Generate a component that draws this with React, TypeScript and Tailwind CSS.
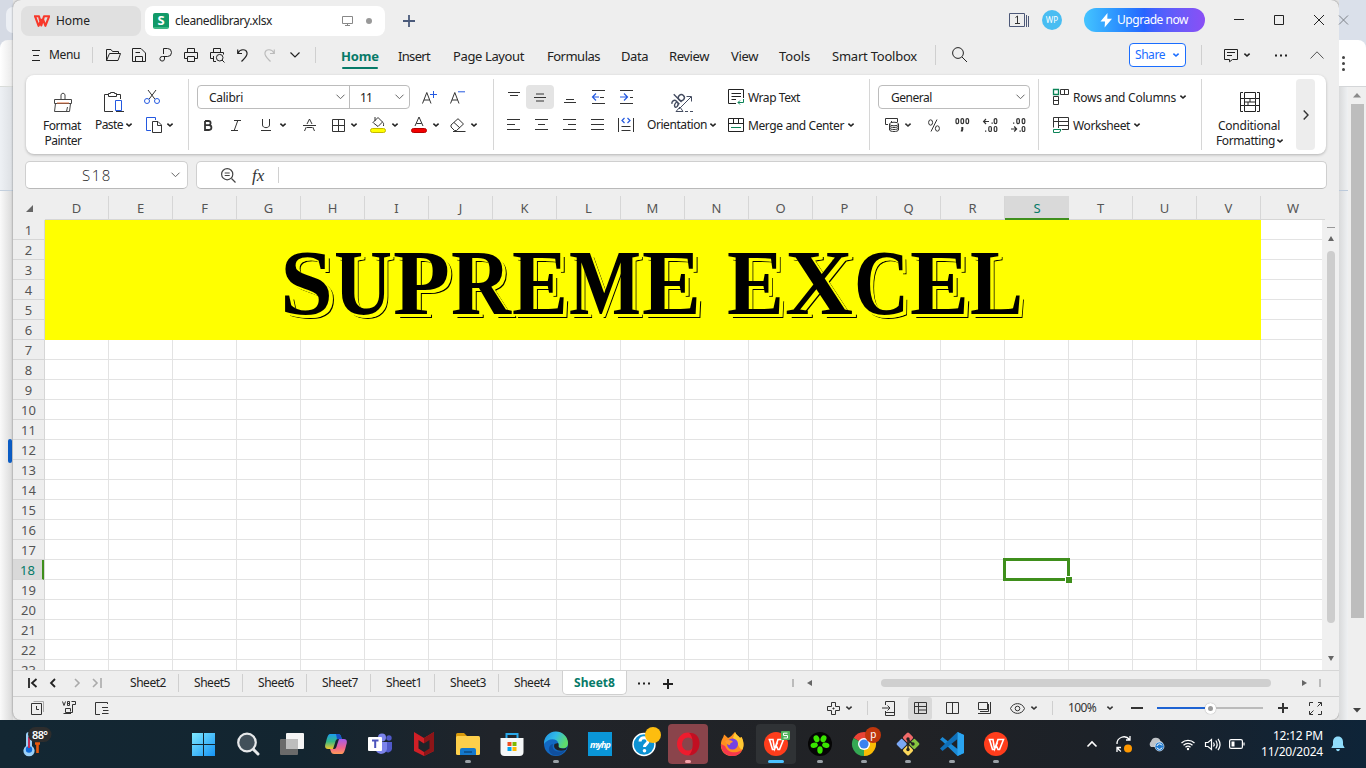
import { useLayoutEffect, useRef } from "react";
import type { ReactNode } from "react";

type IcProps = { w: number; h: number; c?: string; sw?: number; children: ReactNode };

function Ic({ w, h, c = "", sw = 1, children }: IcProps) {
  return (
    <svg
      width={w}
      height={h}
      viewBox={`0 0 ${w} ${h}`}
      fill="none"
      stroke="currentColor"
      strokeWidth={sw}
      className={`shrink-0 overflow-visible ${c}`}
    >
      {children}
    </svg>
  );
}

/* Label whose letter spacing adapts so the text fills the width of its box. */
function Fit({ c = "", children }: { c?: string; children: string }) {
  const ref = useRef<HTMLSpanElement>(null);
  useLayoutEffect(() => {
    const inner = ref.current;
    if (!inner || !inner.parentElement) return;
    inner.style.letterSpacing = "0px";
    const space = inner.parentElement.clientWidth - inner.getBoundingClientRect().width;
    inner.style.letterSpacing = `${space / Math.max(1, children.length)}px`;
  }, [children]);
  return (
    <span className={`block shrink-0 whitespace-nowrap ${c}`}>
      <span ref={ref} className="inline-block">
        {children}
      </span>
    </span>
  );
}

function Chev({ c = "" }: { c?: string }) {
  return (
    <span className={`flex w-3 shrink-0 justify-center ${c}`}>
      <Ic w={6} h={4} sw={1.6}>
        <path d="M.4 .6 3 3 5.6 .6" />
      </Ic>
    </span>
  );
}

function BigChev() {
  return (
    <Ic w={9} h={6} c="text-[#666]">
      <path d="M.5 .7 4.5 4.7 8.5 .7" />
    </Ic>
  );
}

function Cell({ c = "w-7", children }: { c?: string; children: ReactNode }) {
  return <span className={`flex shrink-0 items-center justify-center ${c}`}>{children}</span>;
}

function BehindLeft() {
  return (
    <div className="flex w-[13px] shrink-0 flex-col bg-[#d5dae4]">
      <div className="h-[40px] pt-[7px] pl-[6px]">
        <div className="h-[26px] rounded-l-xl bg-[#eceff4]" />
      </div>
      <div className="h-[47px] rounded-tl-lg border-b border-[#d9dcd9] bg-gradient-to-r from-white to-[#e8e8e8]" />
      <div className="h-[104px] border-b border-[#c3cfdd] bg-gradient-to-r from-[#eef1f5] to-[#dcdfe3]" />
      <div className="flex-1 bg-gradient-to-r from-[#fafafa] to-[#d8d8d8] pt-[248px] pl-2">
        <div className="h-6 w-1 rounded-[2px] bg-[#0b5cc4]" />
      </div>
    </div>
  );
}

function BehindRight() {
  return (
    <div className="flex w-[27px] shrink-0 flex-col bg-[#dae0ea]">
      <div className="h-[40px] pt-[15px]">
        <Ic w={10} h={10} c="text-[#7d8187]">
          <path d="M0 .5 9 9.5M9 .5 0 9.5" />
        </Ic>
      </div>
      <div className="flex h-[47px] flex-col gap-[3px] rounded-tr-lg border-b border-[#d4d6d8] bg-white pt-[16px] pl-[3px]">
        <i className="size-[3px] rounded-full bg-[#444]" />
        <i className="size-[3px] rounded-full bg-[#444]" />
        <i className="size-[3px] rounded-full bg-[#444]" />
      </div>
      <div className="flex flex-1">
        <div className="w-[9px] bg-gradient-to-r from-[#d9dadb] to-[#eff1f3]">
          <div className="h-[104px] border-b border-[#bccadb]" />
        </div>
        <div className="flex flex-1 flex-col items-center bg-[#efefef]">
          <div className="flex h-[17px] items-center">
            <Ic w={8} h={5}>
              <path d="M0 4.5 4 0 8 4.5z" fill="#8a8a8a" stroke="none" />
            </Ic>
          </div>
          <div className="h-[514px] w-[13px] bg-[#bdbdbd]" />
          <div className="flex flex-1 items-end pb-[7px]">
            <Ic w={8} h={5}>
              <path d="M0 0 4 4.5 8 0z" fill="#444" stroke="none" />
            </Ic>
          </div>
        </div>
      </div>
    </div>
  );
}

function WpsMark({ s = 16, color = "#f8382a" }: { s?: number; color?: string }) {
  return (
    <svg width={s} height={s * 0.75} viewBox="0 0 16 12" fill="none" stroke={color} strokeWidth="2.1" strokeLinejoin="round" className="shrink-0">
      <path d="M0 1.2H5L7.3 10.4 10 1.2H15.2L11.4 10.8 8.6 3.2M1 1.2 4.6 10.8 7.6 4" />
    </svg>
  );
}

function TitleBar() {
  return (
    <div className="flex h-[40px] items-center pl-2">
      <div className="mt-[2px] flex h-[30px] w-[120px] items-center rounded-lg bg-[#e0e0e0] pl-[13px] text-[#222]">
        <WpsMark />
        <Fit c="ml-[6px] w-[34px] text-[12px]">Home</Fit>
      </div>
      <div className="mt-[2px] ml-1 flex h-[30px] w-[240px] items-center rounded-lg bg-white pl-2 text-[#222]">
        <div className="flex h-4 w-4 flex-col items-center justify-center rounded-[2px] border-b-2 border-[#3db784] bg-[#119a68] text-[13px] leading-none font-bold text-white">
          S
        </div>
        <Fit c="ml-[6px] w-[97px] text-[12px]">cleanedlibrary.xlsx</Fit>
        <Ic w={11} h={10} c="ml-[70px] text-[#888]">
          <path d="M.5 .5H10.5V7.5H.5zM5.5 7.5V9.5M3 9.5H8" />
        </Ic>
        <i className="ml-[13px] size-[6px] rounded-full bg-[#999]" />
      </div>
      <Ic w={12} h={12} sw={1.8} c="mt-[2px] ml-[18px] text-[#4a5a7a]">
        <path d="M6 0V12M0 6H12" />
      </Ic>
      <Ic w={20} h={14} c="ml-[594px] text-[#4d5878]">
        <path d="M.5 .5H15.5V13.5H.5zM17.5 2V14M19.5 3V14" />
        <path d="M6.5 4.5 8.5 3V10.5M6 10.5H11" stroke="#333" />
      </Ic>
      <div className="ml-[13px] flex size-5 items-center justify-center rounded-full bg-[#49bdf2] text-[8px] text-white">WP</div>
      <div className="ml-[22px] flex h-6 w-[121px] items-center rounded-full bg-gradient-to-r from-[#45c4ff] via-[#2864ff] to-[#8a4ff5] pl-4 text-white">
        <Ic w={13} h={15}>
          <path d="M7.5 0 .5 8.6H5L4.6 14.5 12 5.8H7.3z" fill="#fff" stroke="none" />
        </Ic>
        <Fit c="ml-1 w-[71px] text-[12px]">Upgrade now</Fit>
      </div>
      <Ic w={10} h={10} c="ml-[29px] text-[#222]">
        <path d="M0 4.5H10" />
      </Ic>
      <Ic w={10} h={10} c="ml-[30px] text-[#222]">
        <path d="M.5 .5H9.5V9.5H.5z" />
      </Ic>
      <Ic w={10} h={10} c="ml-[30px] text-[#222]">
        <path d="M0 0 10 10M10 0 0 10" />
      </Ic>
    </div>
  );
}

function MenuRow() {
  return (
    <div className="flex h-[34px] items-center pb-[4px] pl-[19px] text-[#222]">
      <Ic w={8} h={12}>
        <path d="M0 1.5H8M1 6.5H7M0 11.5H8" />
      </Ic>
      <Fit c="ml-[9px] w-[31px] text-[12px]">Menu</Fit>
      <i className="ml-[12px] h-4 w-px bg-[#cfcfcf]" />
      <Ic w={15} h={12} c="ml-[13px]">
        <path d="M.5 11.5V.5H5L6.5 2.5H12.5V4.5M.5 11.5 3.5 4.5H14.5L12 11.5z" />
      </Ic>
      <Ic w={14} h={14} c="ml-[11px]">
        <path d="M.5 .5H9L13.5 5V13.5H.5zM3.5 13.5V8.5H10.5V13.5M3.5 4.5H8" />
      </Ic>
      <Ic w={12} h={14} c="ml-[13px]">
        <path d="M4.5 6V.5H8.5A3.500 3.500 0 0 1 8.5 8.5H3.5A2.3 2.3 0 1 0 5.500 11V8.5" />
      </Ic>
      <Ic w={14} h={14} c="ml-[13px]">
        <path d="M3.5 4.5V.5H10.5V4.5M3.5 10.5H.5V4.5H13.5V10.5H10.5M3.5 8.5H10.5V13.5H3.5z" />
      </Ic>
      <Ic w={15} h={15} c="ml-[12px]">
        <path d="M3.5 4.5V.5H10.5V4.5M3.5 10.5H.5V4.5H13.5V6.5M3.5 8V13.5H6M12 12 14.5 14.5" />
        <circle cx="9.7" cy="9.7" r="3.3" />
      </Ic>
      <Ic w={11} h={13} sw={1.2} c="ml-[12px]">
        <path d="M.7 .5V4.5H5M.9 4.3C3-.3 9-.3 10 3.6 10.8 6.8 7.5 9.5 4.5 12.5" />
      </Ic>
      <Ic w={11} h={13} sw={1.2} c="ml-[16px] text-[#bbb]">
        <path d="M10.3 .5V4.5H6M10.1 4.3C8-.3 2-.3 1 3.6 .2 6.8 3.5 9.5 6.5 12.5" />
      </Ic>
      <Ic w={10} h={6} sw={1.2} c="ml-[15px]">
        <path d="M.5 .5 5 5 9.5 .5" />
      </Ic>
      <i className="ml-[15px] h-4 w-px bg-[#cfcfcf]" />
      <div className="flex h-[30px] items-start pt-[6px] text-[13px] leading-[20px]">
        <div className="ml-[25px] flex flex-col text-[#067a68]">
          <Fit c="w-[38px] font-bold">Home</Fit>
          <i className="mt-px ml-px h-[2px] w-[36px] shrink-0 rounded-full bg-[#067a68]" />
        </div>
        <Fit c="ml-[19px] w-[32px]">Insert</Fit>
        <Fit c="ml-[23px] w-[71px]">Page Layout</Fit>
        <Fit c="ml-[23px] w-[53px]">Formulas</Fit>
        <Fit c="ml-[21px] w-[27px]">Data</Fit>
        <Fit c="ml-[21px] w-[40px]">Review</Fit>
        <Fit c="ml-[22px] w-[27px]">View</Fit>
        <Fit c="ml-[21px] w-[31px]">Tools</Fit>
        <Fit c="ml-[22px] w-[85px]">Smart Toolbox</Fit>
      </div>
      <i className="ml-[18px] h-5 w-px bg-[#cfcfcf]" />
      <Ic w={16} h={16} c="ml-[16px]">
        <circle cx="6" cy="6" r="5.4" />
        <path d="M10 10 15 15" />
      </Ic>
      <div className="ml-[161px] flex h-6 w-[57px] items-center rounded-[4px] border border-[#1a6dff] bg-white pl-[5px] text-[#1a6dff]">
        <Fit c="w-[30px] text-[12px]">Share</Fit>
        <Chev c="ml-[5px]" />
      </div>
      <i className="ml-[15px] h-5 w-px bg-[#cfcfcf]" />
      <Ic w={14} h={13} c="ml-[22px]">
        <path d="M.5 .5H13.5V10.5H8.5L5.5 12.8V10.5H.5zM3 3.5H11M3 6.5H8" />
      </Ic>
      <Chev c="ml-[3px]" />
      <Ic w={14} h={3} c="ml-[21px]">
        <path d="M1 1.5H3M6 1.5H8M11 1.5H13" strokeWidth="2" />
      </Ic>
      <Ic w={14} h={8} c="ml-[22px] text-[#555]">
        <path d="M.5 7.5 7 .8 13.5 7.5" />
      </Ic>
    </div>
  );
}

function Lines({ d, blue, c = "" }: { d: string; blue?: string; c?: string }) {
  return (
    <Cell c={`h-6 w-7 ${c}`}>
      <Ic w={14} h={14} c="text-[#333]">
        <path d={d} />
        {blue && <path d={blue} stroke="#2459e0" strokeWidth="1.2" />}
      </Ic>
    </Cell>
  );
}

function Ribbon() {
  return (
    <div className="mx-[13px] mt-px flex h-[79px] shrink-0 rounded-[8px] bg-white py-1 text-[12px] leading-[15px] text-[#222] shadow-[0_1px_3px_rgba(0,0,0,0.25)]">
      <div className="flex w-[163px] shrink-0 border-r border-[#d6d6d6]">
        <div className="ml-[14px] flex w-[46px] flex-col items-center pt-[13px]">
          <Ic w={18} h={20} c="text-[#444]">
            <path d="M7 7.5V2.500Q9-.5 11 2.500V7.500M.5 7.5H17.5V11.5H.5zM1.5 11.5 .5 19.5H15.5L16.5 11.5M12.5 19.5 13.5 15" />
            <path d="M3 11H15" stroke="#e07040" />
          </Ic>
          <Fit c="mt-[6px] mr-[2px] w-[38px]">Format</Fit>
          <Fit c="w-[37px]">Painter</Fit>
        </div>
        <div className="ml-[9px] flex w-[40px] flex-col items-start pt-[13px]">
          <Ic w={21} h={20} c="ml-[9px] text-[#333]">
            <path d="M4 2.5H.5V19.5H9M13 2.5H16.5V7M4.5 4.5V1.5H6.5V.5H10.5V1.5H12.5V4.5z" />
            <path d="M11.5 8.5H17.5V18.5H11.5z" stroke="#2459e0" />
            <path d="M12 19.5H20" />
          </Ic>
          <div className="mt-[5px] flex items-center">
            <Fit c="w-[28px]">Paste</Fit>
            <Chev />
          </div>
        </div>
        <div className="ml-[9px] flex flex-col">
          <Ic w={16} h={14} c="mt-[11px] text-[#333]">
            <path d="M4 0 10.8 9M12 0 5.2 9" />
            <circle cx="3" cy="11" r="2.5" stroke="#2459e0" />
            <circle cx="13" cy="11" r="2.5" stroke="#2459e0" />
          </Ic>
          <div className="mt-[13px] flex items-center">
            <Ic w={16} h={16} c="ml-[2px] text-[#333]">
              <path d="M5 13.5H.5V.5H9.5V3" stroke="#2459e0" />
              <path d="M6.5 4.5H12L15.5 8V15.5H6.5zM11.5 4.5V8.5H15.5" />
            </Ic>
            <Chev c="ml-[2px]" />
          </div>
        </div>
      </div>

      <div className="flex w-[305px] shrink-0 flex-col border-r border-[#d6d6d6] pt-[6px]">
        <div className="ml-[8px] flex items-center">
          <div className="flex h-6 w-[213px] rounded-[4px] border border-[#bcbcbc]">
            <div className="flex w-[152px] items-center border-r border-[#bcbcbc] pl-[11px]">
              <Fit c="w-[34px] pt-px">Calibri</Fit>
              <span className="ml-[93px]">
                <BigChev />
              </span>
            </div>
            <div className="flex items-center pl-[10px]">
              <Fit c="w-[12px] pt-px">11</Fit>
              <span className="ml-[23px]">
                <BigChev />
              </span>
            </div>
          </div>
          <Ic w={15} h={13} c="ml-[12px] text-[#333]">
            <path d="M.5 12.5 4.8 1.5 9 12.5M2 9H7.6" />
            <path d="M11.5 0V7M8 3.5H15" stroke="#2459e0" />
          </Ic>
          <Ic w={15} h={13} c="ml-[13px] text-[#333]">
            <path d="M.5 12.5 4.8 1.5 9 12.5M2 9H7.6" />
            <path d="M8 .8H15" stroke="#2459e0" />
          </Ic>
        </div>
        <div className="mt-[4px] ml-[5px] flex h-6 items-center">
          <Cell>
            <Ic w={8} h={11} sw={1.8} c="text-[#333]">
              <path d="M1 1H4.5A2 2 0 0 1 4.5 5.2H1V1M1 5.2H5A2.3 2.3 0 0 1 5 10H1V5" />
            </Ic>
          </Cell>
          <Cell>
            <Ic w={10} h={11} c="text-[#333]">
              <path d="M3 .5H10M0 10.5H7M6.8 .5 3.2 10.5" />
            </Ic>
          </Cell>
          <Cell c="ml-[5px] w-[22px]">
            <Ic w={10} h={12} c="text-[#333]">
              <path d="M1.5 0V6C1.5 9.5 8.5 9.5 8.5 6V0M0 11.5H10" />
            </Ic>
          </Cell>
          <Chev />
          <Cell c="ml-[6px] w-7">
            <Ic w={13} h={12} c="text-[#333]">
              <path d="M4 5 6.5 0 9 5M0 6.5H13M3.3 8 1.5 12M9.7 8 11.5 12M4 8.5H9" />
            </Ic>
          </Cell>
          <Cell c="ml-[5px] w-5">
            <Ic w={13} h={13} c="text-[#333]">
              <path d="M.5 .5H12.5V12.5H.5zM6.5 .5V12.5M.5 6.5H12.5" />
            </Ic>
          </Cell>
          <Chev />
          <Cell c="ml-[7px] w-[22px]">
            <Ic w={16} h={16} c="text-[#333]">
              <path d="M3 5.500 8 .5 12.5 5 8 9.5 3.5 6zM5 0V4M12.5 5C14 6 13.5 7 13.5 9" />
              <rect x=".5" y="11.5" width="15" height="4" rx="2" fill="#ffff00" stroke="#c4b800" />
            </Ic>
          </Cell>
          <Chev />
          <Cell c="ml-[7px] w-[22px]">
            <Ic w={16} h={16} c="text-[#333]">
              <path d="M4 9 8 0 12 9M5.3 6.5H10.7" />
              <rect x=".5" y="11.5" width="15" height="4" rx="2" fill="#f20000" stroke="#b80000" />
            </Ic>
          </Cell>
          <Chev />
          <Cell c="ml-[5px] w-[21px]">
            <Ic w={16} h={14} c="text-[#333]">
              <path d="M1 7 8 .7 13.5 6 6.5 12.5H4.5L1 9zM4 4.5 10 10M3 13.5H15.5" />
            </Ic>
          </Cell>
          <Chev />
        </div>
      </div>

      <div className="flex w-[376px] shrink-0 border-r border-[#d6d6d6]">
        <div className="ml-[6px] grid w-[140px] grid-cols-5 content-start gap-y-[4px] pt-[6px]">
          <Lines d="M1 2.5H13M3 5.5H11" />
          <span className="pr-1">
            <Lines d="M3 4H11M1 7.5H13M3 11H11" c="-ml-[2px] rounded-[4px] bg-[#e4e4e4] w-6" />
          </span>
          <Lines d="M3 9.5H11M1 12.5H13" />
          <Lines d="M1 .5H14M9 7.5H13M1 13.5H14" blue="M8 7H2M5 3.5 1.5 7 5 10.5" />
          <Lines d="M1 .5H14M11 7.5H14M1 13.5H14" blue="M1 7H8M5 3.5 8.5 7 5 10.5" />
          <Lines d="M0 1.5H13M0 6.5H8M0 11.5H13" />
          <Lines d="M0 1.5H13M3 6.5H10M0 11.5H13" />
          <Lines d="M0 1.5H13M5 6.5H13M0 11.5H13" />
          <Lines d="M0 1.5H13M0 6.5H13M0 11.5H13" />
          <Lines d="M-.5 0V14M14.5 0V14M2.5 8.5H11.5M2.5 12.5H11.5" blue="M5.5 0 3 2.5 5.5 5M8.5 0 11 2.5 8.5 5" />
        </div>
        <div className="ml-[7px] flex w-[74px] flex-col pt-[11px]">
          <Ic w={24} h={24} c="ml-[23px] text-[#444c60]">
            <g transform="rotate(-45 8 10)" strokeWidth="1.400">
              <path d="M1 8.500C2 6.500 6 6.500 6 9.500V14M6 10.500C0 10 0 14.500 3 14 5 13.700 6 12.500 6 11M9 3V14" />
              <circle cx="12" cy="10.700" r="3" />
            </g>
            <path d="M9 19 21 7M16.500 6.500H21.5V11.500M6 21.500H13L10 17z" />
            <path d="M15 21.5H24" strokeDasharray="3 2" />
          </Ic>
          <div className="mt-[3px] flex items-center">
            <Fit c="w-[60px]">Orientation</Fit>
            <Chev />
          </div>
        </div>
        <div className="ml-[7px] flex flex-col pt-[6px]">
          <div className="flex h-6 items-center">
            <Ic w={16} h={16} c="text-[#222]">
              <path d="M8 14.5H.5V.5H15.5V9M3.5 4.5H13M3.5 7.5H13M3.5 10.5H8" />
              <path d="M15.5 10V13.5H10M12 11.5 10 13.5 12 15.5" stroke="#0b8457" />
            </Ic>
            <Fit c="ml-[4px] w-[52px]">Wrap Text</Fit>
          </div>
          <div className="mt-[4px] flex h-6 items-center">
            <Ic w={16} h={14} c="text-[#222]">
              <path d="M.5 .5H15.5V13.5H.5zM.5 5.5H15.5M5.5 .5V5.5M10.5 .5V5.5" />
              <path d="M3 9.5H13" stroke="#0b8457" />
            </Ic>
            <Fit c="ml-[4px] w-[96px]">Merge and Center</Fit>
            <Chev c="ml-[1px]" />
          </div>
        </div>
      </div>

      <div className="flex w-[169px] shrink-0 flex-col border-r border-[#d6d6d6] pt-[6px] pl-[8px]">
        <div className="flex h-6 w-[152px] items-center rounded-[4px] border border-[#bcbcbc] pl-[12px]">
          <Fit c="w-[41px] pt-px">General</Fit>
          <span className="ml-[84px]">
            <BigChev />
          </span>
        </div>
        <div className="mt-[4px] flex h-6 items-center text-[#333]">
          <Cell c="ml-[3px] w-[21px]">
            <Ic w={14} h={14}>
              <path d="M3 6.5H.5V.5H12.5V4M6 3.5H7" />
              <ellipse cx="9" cy="6" rx="4.5" ry="1.8" />
              <path d="M4.5 6V12C5 14 13 14 13.5 12V6M4.5 8C5 10 13 10 13.5 8M4.5 10C5 12 13 12 13.5 10" />
            </Ic>
          </Cell>
          <Chev />
          <Cell c="ml-[6px] w-7">
            <Ic w={12} h={13}>
              <ellipse cx="2.600" cy="3.500" rx="2" ry="2.700" />
              <ellipse cx="9.400" cy="9.500" rx="2" ry="2.700" />
              <path d="M9 .5 3 12.500" />
            </Ic>
          </Cell>
          <Cell>
            <Ic w={15} h={14} sw={1.200}>
              <rect x="1" y=".6" width="2.600" height="5" rx="1.300" />
              <rect x="6" y=".6" width="2.600" height="5" rx="1.300" />
              <rect x="11" y=".6" width="2.600" height="5" rx="1.300" />
              <path d="M7.300 9V11.500L6.500 13.500" strokeWidth="2" />
            </Ic>
          </Cell>
          <Cell>
            <Ic w={15} h={14} sw={1.200}>
              <path d="M6 3.500H.8M3 1 .6 3.500 3 6M8.500 5.200H9.800M2 13.200H3.300" />
              <rect x="11.200" y=".6" width="2.600" height="5" rx="1.300" />
              <rect x="5.800" y="8.500" width="2.600" height="5" rx="1.300" />
              <rect x="11.200" y="8.500" width="2.600" height="5" rx="1.300" />
            </Ic>
          </Cell>
          <Cell>
            <Ic w={15} h={14} sw={1.200}>
              <path d="M0 11H5.400M3.200 8.500 5.600 11 3.200 13.500M2 5.200H3.300M8.500 13.200H9.800" />
              <rect x="11.200" y=".6" width="2.600" height="5" rx="1.300" />
              <rect x="5.800" y=".6" width="2.600" height="5" rx="1.300" />
              <rect x="11.200" y="8.500" width="2.600" height="5" rx="1.300" />
            </Ic>
          </Cell>
        </div>
      </div>

      <div className="flex w-[163px] shrink-0 flex-col border-r border-[#d6d6d6] pt-[6px] pl-[14px]">
        <div className="flex h-6 items-center">
          <Ic w={16} h={16} c="text-[#333]">
            <path d="M.5 .5H5.5V5.5H.5z" stroke="#0b8457" strokeWidth="1.3" />
            <path d="M7.5 .5H15.5V5.5H7.5zM11.5 .5V5.5M.5 7.5H5.5V15.5H.5zM.5 11.5H5.5" />
          </Ic>
          <Fit c="ml-[4px] w-[103px]">Rows and Columns</Fit>
          <Chev c="ml-[1px]" />
        </div>
        <div className="mt-[4px] flex h-6 items-center">
          <Ic w={16} h={16} c="text-[#333]">
            <path d="M.5 10.5V.5H15.5V12.5H9M.5 4.5H15.5M5.5 .5V11M5.5 8.5H15.5" />
            <path d="M.5 12.5H8L6.5 15.5H.5z" stroke="#0b8457" />
          </Ic>
          <Fit c="ml-[4px] w-[57px]">Worksheet</Fit>
          <Chev c="ml-[1px]" />
        </div>
      </div>

      <div className="flex flex-1">
        <div className="flex w-[94px] flex-col items-center pt-[13px]">
          <Ic w={20} h={20} c="ml-[2px] text-[#222]">
            <path d="M3 .5H.5V19.5H3M17 .5H19.5V19.5H17M.5 6.5H4M.5 13.5H4M19.5 6.5H16M19.5 13.5H16M4.5 .5H15.5V6.5H4.5zM4.5 13.5H15.5V19.5H4.5zM4.5 6.5V13.5M15.5 6.5V13.5M4.5 10H15.5M10 6.5V10M8 10V13.5" />
          </Ic>
          <Fit c="mt-[6px] w-[62px]">Conditional</Fit>
          <div className="ml-[2px] flex items-center">
            <Fit c="w-[59px]">Formatting</Fit>
            <Chev c="w-[9px]" />
          </div>
        </div>
        <div className="flex w-[19px] items-center justify-center rounded-[4px] bg-[#ededed]">
          <Ic w={6} h={10} sw={1.4} c="text-[#333]">
            <path d="M.7 .5 5 5 .7 9.5" />
          </Ic>
        </div>
      </div>
    </div>
  );
}

function FormulaBar() {
  return (
    <div className="mt-[7px] flex h-[28px] shrink-0 gap-2 px-[12px]">
      <div className="flex w-[163px] items-center rounded-[5px] border border-[#cfcfcf] border-b-[#b9b9b9] bg-white pl-[56px] text-[#222]">
        <Fit c="w-[30px] font-['Open_Sans','Noto_Sans',sans-serif] text-[15px] font-light">S18</Fit>
        <span className="ml-[59px]">
          <BigChev />
        </span>
      </div>
      <div className="flex flex-1 items-center rounded-[5px] border border-[#cfcfcf] border-b-[#b9b9b9] bg-white pl-[24px] text-[#444]">
        <Ic w={15} h={15} sw={1.2}>
          <circle cx="6.2" cy="6.2" r="5.6" />
          <path d="M3.7 5H8.7M3.7 7.5H8.7M10.5 10.5 14.5 14.5" />
        </Ic>
        <span className="ml-[16px] w-[15px] font-['Liberation_Serif',serif] text-[17px] leading-none text-[#333] italic">fx</span>
        <i className="ml-[11px] h-4 w-px bg-[#d0d0d0]" />
      </div>
    </div>
  );
}

const columns = "DEFGHIJKLMNOPQRSTUVW".split("");
const rows = Array.from({ length: 23 }, (_, i) => i + 1);

type Glyph = { ch: string; width: number; natural: number };
const titleGlyphs: Glyph[] = [
  { ch: "S", width: 54, natural: 0.556 },
  { ch: "U", width: 59, natural: 0.722 },
  { ch: "P", width: 58, natural: 0.611 },
  { ch: "R", width: 61, natural: 0.722 },
  { ch: "E", width: 57, natural: 0.667 },
  { ch: "M", width: 73, natural: 0.944 },
  { ch: "E", width: 60, natural: 0.667 },
  { ch: "\u00a0", width: 25, natural: 0.25 },
  { ch: "E", width: 58, natural: 0.667 },
  { ch: "X", width: 69, natural: 0.722 },
  { ch: "C", width: 56, natural: 0.722 },
  { ch: "E", width: 60, natural: 0.667 },
  { ch: "L", width: 54, natural: 0.667 },
];
const titleSize = 93;

function Sheet() {
  return (
    <div className="mt-[7px] flex h-[474px] shrink-0 flex-col overflow-hidden">
      <div className="flex h-6 shrink-0 text-[13px] text-[#555]">
        <div className="flex w-8 shrink-0 items-center justify-center pt-px">
          <Ic w={7} h={7}>
            <path d="M7 0V7H0z" fill="#666" stroke="none" />
          </Ic>
        </div>
        {columns.map((name) => (
          <div
            key={name}
            className={
              name === "S"
                ? "flex w-16 shrink-0 items-center justify-center border-b-2 border-b-[#3f8f1c] bg-[#d9d9d9] pt-[3px] text-[#067a68]"
                : name === "W"
                  ? "flex w-16 shrink-0 items-center justify-center border-b border-[#d6d6d6] pt-[3px]"
                  : "flex w-16 shrink-0 items-center justify-center border-r border-b border-[#d6d6d6] pt-[3px]"
            }
          >
            {name}
          </div>
        ))}
      </div>
      <div className="flex flex-1 overflow-hidden">
        <div className="w-8 shrink-0 border-r border-[#d6d6d6] text-[13px] text-[#555]">
          {rows.map((n) => (
            <div
              key={n}
              className={
                n === 18
                  ? "flex h-5 items-center justify-center border-r-2 border-b border-r-[#3f8f1c] border-b-[#d6d6d6] bg-[#d9d9d9] pt-[2px] text-[#067a68]"
                  : "flex h-5 items-center justify-center border-b border-[#d6d6d6] pt-[2px]"
              }
            >
              {n}
            </div>
          ))}
        </div>
        <div className="relative w-[1277px] shrink-0 overflow-hidden bg-white bg-[linear-gradient(to_right,transparent_63px,#e3e3e3_63px),linear-gradient(to_bottom,transparent_19px,#e3e3e3_19px)] bg-[size:64px_20px]">
          <div className="h-[120px] w-[1216px] bg-[#ffff00] pl-[235px]">
            <h1 className="flex font-['Liberation_Serif',serif] text-[93px] leading-[125px] font-bold whitespace-nowrap text-black [text-shadow:1px_1px_0_#ff0,2px_1px_0_#ff0,2px_2px_0_#ff0,3px_2px_0_#ff0,3px_3px_0_#ff0,4px_3px_0_#ff0,5px_4px_0_#000]">
              {titleGlyphs.map((g, i) => (
                <span key={i} className="block shrink-0" style={{ width: g.width }}>
                  <span
                    className="inline-block origin-left"
                    style={{ transform: `scaleX(${(g.width - 1) / (g.natural * titleSize)})` }}
                  >
                    {g.ch}
                  </span>
                </span>
              ))}
            </h1>
          </div>
          <div className="absolute top-[338px] left-[958px] h-[23px] w-[67px] border-3 border-[#3f8f1c]" />
          <div className="absolute top-[356px] left-[1020px] size-[7px] border-t border-l border-white bg-[#3f8f1c]" />
        </div>
        <div className="flex flex-1 flex-col items-center bg-[#f0f0f0] pt-[7px]">
          <i className="h-px w-2 bg-[#999]" />
          <Ic w={6} h={5} c="mt-[8px]">
            <path d="M0 5 3 0 6 5z" fill="#666" stroke="none" />
          </Ic>
          <i className="mt-[10px] h-[372px] w-2 rounded-full bg-[#cdcdcd]" />
          <Ic w={6} h={5} c="mt-[33px]">
            <path d="M0 0 3 5 6 0z" fill="#666" stroke="none" />
          </Ic>
        </div>
      </div>
    </div>
  );
}

const sheets = ["Sheet2", "Sheet5", "Sheet6", "Sheet7", "Sheet1", "Sheet3", "Sheet4"];

function SheetTabs() {
  return (
    <div className="flex h-[26px] shrink-0 items-center border-t border-[#d6d6d6] pb-px text-[12px] text-[#222]">
      <Ic w={9} h={10} sw={1.8} c="ml-[15px]">
        <path d="M1 0V10M8.5 1 4 5 8.5 9" />
      </Ic>
      <Ic w={6} h={10} sw={1.8} c="ml-[13px]">
        <path d="M5 1 1 5 5 9" />
      </Ic>
      <Ic w={6} h={10} sw={1.6} c="ml-[18px] text-[#aaa]">
        <path d="M1 1 5 5 1 9" />
      </Ic>
      <Ic w={10} h={10} sw={1.6} c="ml-[12px] text-[#aaa]">
        <path d="M1 1 5 5 1 9M9 0V10" />
      </Ic>
      <div className="ml-[13px] flex">
        {sheets.map((name) => (
          <div key={name} className={name === "Sheet4" ? "flex h-[18px] w-[63px] items-center pl-[15px]" : "flex h-[18px] w-16 items-center border-r border-[#cfcfcf] pl-[15px]"}>
            <Fit c="w-[36px]">{name}</Fit>
          </div>
        ))}
      </div>
      <div className="flex h-[25px] w-[65px] items-start">
        <div className="flex h-[24px] w-[65px] items-center justify-center rounded-b-[5px] border border-t-0 border-[#d0d0d0] bg-white pt-px font-bold text-[#067a68]">
          <Fit c="w-[41px]">Sheet8</Fit>
        </div>
      </div>
      <Ic w={14} h={3} c="ml-[10px]">
        <path d="M1 1.5H3M6 1.5H8M11 1.5H13" strokeWidth="2" />
      </Ic>
      <Ic w={10} h={10} sw={2} c="mt-px ml-[12px]">
        <path d="M5 0V10M0 5H10" />
      </Ic>
      <i className="ml-[119px] h-2 w-[2px] bg-[#bbb]" />
      <Ic w={5} h={6} c="ml-[13px]">
        <path d="M5 0 0 3 5 6z" fill="#666" stroke="none" />
      </Ic>
      <i className="ml-[69px] h-2 w-[390px] rounded-full bg-[#cfcfcf]" />
      <Ic w={5} h={6} c="ml-[31px]">
        <path d="M0 0 5 3 0 6z" fill="#666" stroke="none" />
      </Ic>
      <i className="ml-[12px] h-2 w-[2px] bg-[#bbb]" />
    </div>
  );
}

function StatusBar() {
  return (
    <div className="flex h-6 shrink-0 items-center border-t border-[#d0d0d0] pb-px text-[#333]">
      <Ic w={13} h={14} c="ml-[18px]">
        <path d="M.5 2.5H10.5V13.5H.5zM5.5 5V8.5H8" />
        <path d="M2.5 .5H12.5V11" stroke="#aaa" />
      </Ic>
      <Ic w={14} h={14} c="ml-[18px]">
        <path d="M.5 .5 2 4.5 3.5 .5M5.5 .5V4.5H7.5V.5H5.5M5.5 2.5H7.5M9.5 .5H13.5V3.5H10.5V11.5H3.5V7.5H8.5V10.5M1.5 12.5H9" />
      </Ic>
      <Ic w={14} h={13} c="ml-[19px]">
        <path d="M12.5 2V.5H.5V12.5H5M7 5.5H13M8 8.5H13.5M7 11.5H13.5" />
      </Ic>
      <Ic w={13} h={13} c="ml-[718px]">
        <path d="M4.5 4.5V.5H8.5V4.5M4.5 4.5H.5V8.5H4.5M8.5 4.5H12.5V8.5H8.5M4.5 8.5V12.5H8.5V8.5M6.500 5.500V7.500M5.500 6.500H7.500" />
      </Ic>
      <Chev c="ml-[3px]" />
      <i className="ml-[12px] h-[14px] w-px bg-[#cfcfcf]" />
      <Ic w={14} h={15} c="ml-[14px]">
        <path d="M3.5 4V.5H12.5V14.5H3.5V10M3.5 11.5H12.5M0 7H8M5.5 4.5 8 7 5.5 9.5" />
      </Ic>
      <div className="ml-[12px] flex h-[23px] w-6 items-center justify-center rounded-[3px] bg-[#d9d9d9]">
        <Ic w={13} h={12}>
          <path d="M.5 .5H12.5V11.5H.5zM.5 4.5H12.5M4.5 .5V11.5M4.5 8H12.5" />
        </Ic>
      </div>
      <Ic w={13} h={12} c="ml-[14px]">
        <path d="M.5 .5H12.5V11.5H.5zM6.5 .5V11.5" />
      </Ic>
      <Ic w={13} h={12} c="ml-[19px]">
        <path d="M.5 .5H9.5V7.5H.5zM12.5 0V11.5H0M2 9.5H10.5V2" />
      </Ic>
      <Ic w={15} h={11} c="ml-[19px]">
        <path d="M.5 5.5C3-1 12-1 14.5 5.5 12 12 3 12 .5 5.5z" />
        <circle cx="7.5" cy="5.5" r="2.3" />
      </Ic>
      <Chev c="ml-[3px]" />
      <i className="ml-[12px] h-[14px] w-px bg-[#cfcfcf]" />
      <Fit c="ml-[15px] w-[28px] text-[12px]">100%</Fit>
      <Chev c="ml-[8px]" />
      <i className="ml-[15px] h-[2px] w-3 bg-[#333]" />
      <div className="ml-[14px] flex items-center">
        <i className="h-[2px] w-[48px] bg-[#1d62d2]" />
        <i className="flex size-[11px] items-center justify-center rounded-full border-3 border-white bg-[#999] shadow-[0_0_1px_#888]" />
        <i className="h-[2px] w-[47px] bg-[#bbb]" />
      </div>
      <Ic w={10} h={10} sw={2} c="ml-[15px]">
        <path d="M5 0V10M0 5H10" />
      </Ic>
      <Ic w={13} h={13} c="ml-[21px]">
        <path d="M.5 4V.5H4M9 .5H12.5V4M12.5 9V12.5H9M.5 9V12.5H4M12 1 8.5 4.5M1 12 4.5 8.5" />
      </Ic>
    </div>
  );
}

function TaskIcon({ children, dot = "", c = "" }: { children: ReactNode; dot?: string; c?: string }) {
  return (
    <div className="flex h-full w-11 shrink-0 flex-col items-center pt-1">
      <div className={`flex h-10 w-10 flex-col items-center rounded-[4px] pt-2 ${c}`}>
        <div className="size-6">{children}</div>
        {dot && <i className={`mt-[4px] h-[3px] shrink-0 rounded-full ${dot}`} />}
      </div>
    </div>
  );
}

function G({ children }: { children: ReactNode }) {
  return (
    <svg width="24" height="24" viewBox="0 0 24 24" className="overflow-visible">
      {children}
    </svg>
  );
}

function WpsRound() {
  return (
    <>
      <circle cx="12" cy="12" r="12" fill="#ff3d1c" />
      <path d="M4.5 7.5H9L10.5 17 13.5 10.5M5.5 7.5 8.5 17.5H10.5L14 7.5H19.5L15.5 17.5H14L12 13" stroke="#fff" strokeWidth="1.6" fill="none" />
    </>
  );
}

const dotGray = "w-[6px] bg-[#9aa0a6]";

function Taskbar() {
  return (
    <div className="flex h-12 shrink-0 bg-[linear-gradient(to_right,#132733_0%,#132530_22%,#20242a_36%,#212225_65%,#1c2128_80%,#0e2438_100%)] text-white">
      <div className="flex w-[182px] shrink-0 pt-[6px] pl-[22px]">
        <svg width="34" height="32" viewBox="0 0 34 32">
          <path d="M4 9A3 3 0 0 1 10 9V20A5.6 5.6 0 1 1 4 20z" fill="#9bd0f7" />
          <circle cx="7" cy="23.5" r="3.2" fill="#0f6ad8" />
          <path d="M7 11V22" stroke="#c22f5a" strokeWidth="2" />
          <path d="M13 17.5H18M15.5 17.5V27" stroke="#e8590c" strokeWidth="2.6" />
          <rect x="6" y="1" width="23.5" height="15" rx="7.5" fill="#2d2d2d" />
          <text x="10" y="13" fontSize="11" fontWeight="600" fill="#fff" textLength="16">
            88°
          </text>
        </svg>
      </div>
      <TaskIcon>
        <G>
          <defs>
            <linearGradient id="win" x1="0" y1="0" x2="1" y2="1">
              <stop offset="0" stopColor="#7fe9ff" />
              <stop offset="1" stopColor="#1593f5" />
            </linearGradient>
          </defs>
          <path d="M0 1H11V12H0zM12 1H23V12H12zM0 13H11V24H0zM12 13H23V24H12z" fill="url(#win)" />
        </G>
      </TaskIcon>
      <TaskIcon>
        <G>
          <circle cx="11" cy="10.500" r="8.800" fill="#42505a" stroke="#e6e8ea" strokeWidth="2.200" />
          <path d="M17.500 17.500 22 22" stroke="#e6e8ea" strokeWidth="3" strokeLinecap="round" />
        </G>
      </TaskIcon>
      <TaskIcon>
        <G>
          <rect x="6" y="1" width="18" height="16" rx="1" fill="#f4f4f4" />
          <rect x="0" y="7" width="18" height="16" rx="1" fill="#6a6a6a" />
          <rect x="6" y="7" width="12" height="10" fill="#bdbdbd" />
        </G>
      </TaskIcon>
      <TaskIcon>
        <G>
          <defs>
            <linearGradient id="cpa" x1="0" y1="0" x2="0" y2="1">
              <stop offset="0" stopColor="#1b9cf0" />
              <stop offset=".5" stopColor="#35b985" />
              <stop offset="1" stopColor="#f3c62c" />
            </linearGradient>
            <linearGradient id="cpb" x1="0" y1="0" x2="0" y2="1">
              <stop offset="0" stopColor="#a45bea" />
              <stop offset=".6" stopColor="#f0648c" />
              <stop offset="1" stopColor="#ff9b57" />
            </linearGradient>
          </defs>
          <path d="M6 2H14C17 2 17 5 18 7H14C12 7 11.500 9 11 11L9 17H4C0 17 1 13 2 10 3 6 4 2 6 2z" fill="url(#cpa)" />
          <path d="M12 2H14C17 2 17 5 18 7H13z" fill="#1750c8" />
          <path d="M18 22H10C7 22 7 19 6 17H10C12 17 12.500 15 13 13L15 7H20C24 7 23 11 22 14 21 18 20 22 18 22z" fill="url(#cpb)" />
        </G>
      </TaskIcon>
      <TaskIcon>
        <G>
          <circle cx="14" cy="5.500" r="4" fill="#7b83eb" />
          <circle cx="21" cy="6" r="2.700" fill="#5059c9" />
          <path d="M17 10H24V17A4 4 0 0 1 17 19z" fill="#5059c9" />
          <path d="M8 10H19V17A6 6 0 0 1 8 19z" fill="#7b83eb" />
          <rect x="0" y="5" width="14" height="14" rx="1" fill="#fff" />
          <path d="M4 8.500H10.500M7.200 8.500V16" stroke="#4b53bc" strokeWidth="2" />
        </G>
      </TaskIcon>
      <TaskIcon>
        <G>
          <path d="M2 0 12 6 22 0V19L12 24 2 19z" fill="#d01f26" />
          <path d="M22 0 12 6V24L22 19z" fill="#8c1518" />
          <path d="M6.500 8 12 11.500 17.500 8V16.500L12 20 6.500 16.500z" fill="#1e2429" />
        </G>
      </TaskIcon>
      <TaskIcon dot={dotGray}>
        <G>
          <path d="M0 2.500Q0 1 1.500 1H8L11 4V8H0z" fill="#d99a0b" />
          <rect x="0" y="4" width="24" height="19" rx="1.500" fill="#fdcf4b" />
          <path d="M4 23V18A2 2 0 0 1 6 16H18A2 2 0 0 1 20 18V23z" fill="#1478cc" />
          <path d="M8 20H16" stroke="#0d5594" strokeWidth="2" />
        </G>
      </TaskIcon>
      <TaskIcon>
        <G>
          <path d="M6.500 6V2H17.500V6" stroke="#28a8ea" strokeWidth="2" fill="none" />
          <path d="M.5 6H23.500V20A4 4 0 0 1 19.500 24H4.500A4 4 0 0 1 .5 20z" fill="#f5f7f8" />
          <path d="M7.500 10H11.500V14H7.500z" fill="#f04e1f" />
          <path d="M12.500 10H16.500V14H12.500z" fill="#7db900" />
          <path d="M7.500 15H11.500V19H7.500z" fill="#00a3ee" />
          <path d="M12.500 15H16.500V19H12.500z" fill="#fdb900" />
        </G>
      </TaskIcon>
      <TaskIcon dot={dotGray}>
        <G>
          <defs>
            <linearGradient id="edge" x1="0" y1="0" x2="1" y2=".4">
              <stop offset="0" stopColor="#1f8fe0" />
              <stop offset=".5" stopColor="#30b8e8" />
              <stop offset="1" stopColor="#5fdc6a" />
            </linearGradient>
          </defs>
          <circle cx="12" cy="12" r="12" fill="#1268c2" />
          <path d="M0 12A12 12 0 0 1 24 11C24 16 20 17 16 16 13.500 15.500 15 14 14.500 11.500 13.500 6 4 5.500 0 12z" fill="url(#edge)" />
          <path d="M9 12C7 18 13 21.500 21 18.500 18 23 12 25 8 22.500 3 19 4.500 13 9 12z" fill="#104f9e" />
          <path d="M10.500 12C8.500 17 14 20 21.500 18L24 14C22 17 18 17 15.500 15.800 13.500 14.500 15.500 13 14 11z" fill="#1f2226" />
        </G>
      </TaskIcon>
      <TaskIcon>
        <div className="flex size-6 items-center justify-center bg-[#0a96d8]">
          <Fit c="w-[20px] font-['Open_Sans',sans-serif] text-[9px] leading-none font-bold italic">myhp</Fit>
        </div>
      </TaskIcon>
      <TaskIcon>
        <G>
          <circle cx="12" cy="12.500" r="11" fill="#0d92d3" stroke="#fff" strokeWidth="1.400" />
          <path d="M8 9.500C8 4.500 16 4.500 16 9.200 16 12 12.500 12 12.500 15" stroke="#fff" strokeWidth="3" fill="none" />
          <circle cx="12.500" cy="18.800" r="1.800" fill="#fff" />
          <circle cx="21" cy="3" r="8" fill="#fdbd0f" />
        </G>
      </TaskIcon>
      <TaskIcon dot="w-[6px] bg-[#f5a3ab]" c="bg-[#8a444b]">
        <G>
          <ellipse cx="12" cy="12" rx="8.500" ry="9" fill="none" stroke="#ee1c2e" strokeWidth="5" />
          <path d="M13 1C21 0 24 7 23.500 12 23 19 18 24 13 23 18 20 18 4 13 1z" fill="#c20f22" />
        </G>
      </TaskIcon>
      <TaskIcon>
        <G>
          <path d="M12 24C4 24 0 18 1 11 1.500 7 3.500 6 4 2.500 6 4 7 5 8 6 11 5 12 3 15 0 16 3 19 4 20 6L21.500 5C24 10 24 14 22.500 17.500 20.500 22 16.500 24 12 24z" fill="#ff8f1f" />
          <path d="M15 0C16 3 19 4 20 6L21.500 5C24 10 24 14 22.500 17.500 18 17 18 9 13 6z" fill="#ffc933" />
          <path d="M1 12C1 20 6 24 12 24 17 24 20 22 22 18 15 22 8 21 5 14z" fill="#f5384c" />
          <circle cx="12.500" cy="12" r="5.500" fill="#7542e5" />
          <path d="M5 9C8 7 12 8 13 10 11 10.500 10 11 10 13 7 13 6 11 5 9z" fill="#ff9a2e" />
        </G>
      </TaskIcon>
      <TaskIcon dot="w-4 bg-[#4cc2ff]" c="bg-[#2f3235]">
        <G>
          <WpsRound />
          <rect x="17" y="-1" width="9" height="9" rx="1" fill="#4fb05a" />
          <path d="M23.500 1.200H19.500V3.500H23.500V6H19.500" stroke="#fff" fill="none" />
        </G>
      </TaskIcon>
      <TaskIcon dot={dotGray}>
        <G>
          <circle cx="12" cy="12" r="12" fill="#050505" />
          <g fill="#39e600">
            <ellipse cx="8.500" cy="6.800" rx="2.800" ry="3.600" transform="rotate(-25 8.500 6.800)" />
            <ellipse cx="15.500" cy="6.800" rx="2.800" ry="3.600" transform="rotate(25 15.500 6.800)" />
            <ellipse cx="6.200" cy="13.300" rx="3.700" ry="2.600" transform="rotate(-15 6.200 13.300)" />
            <ellipse cx="17.800" cy="13.300" rx="3.700" ry="2.600" transform="rotate(15 17.800 13.300)" />
            <ellipse cx="12" cy="18" rx="2.700" ry="3.700" />
          </g>
          <circle cx="12" cy="12" r="1.800" fill="#050505" />
        </G>
      </TaskIcon>
      <TaskIcon dot={dotGray}>
        <G>
          <path d="M12 12 1.600 6A12 12 0 0 1 22.400 6z" fill="#ea4335" />
          <path d="M12 12 22.400 6A12 12 0 0 1 12 24z" fill="#fbbc05" />
          <path d="M12 12V24A12 12 0 0 1 1.600 6z" fill="#34a853" />
          <circle cx="12" cy="12" r="6" fill="#fff" />
          <circle cx="12" cy="12" r="4.600" fill="#3b82f0" />
          <circle cx="21" cy="3" r="8" fill="#bf360c" />
          <text x="18.300" y="6" fontSize="10" fill="#fff">
            p
          </text>
        </G>
      </TaskIcon>
      <TaskIcon dot={dotGray}>
        <G>
          <g transform="rotate(45 12 12)">
            <rect x="3.500" y="3.500" width="8" height="8" rx="1.500" fill="#f06a6a" />
            <rect x="12.500" y="3.500" width="8" height="8" rx="1.500" fill="#86c440" />
            <rect x="3.500" y="12.500" width="8" height="8" rx="1.500" fill="#7aa7f5" />
            <rect x="12.500" y="12.500" width="8" height="8" rx="1.500" fill="#fbd75b" />
          </g>
          <path d="M12 6V18M12 7.500 16.500 12" stroke="#222" strokeWidth="1.500" />
          <circle cx="12" cy="7" r="1.700" fill="#222" />
          <circle cx="12" cy="17.500" r="1.700" fill="#222" />
          <circle cx="17" cy="12" r="1.700" fill="#222" />
        </G>
      </TaskIcon>
      <TaskIcon dot={dotGray}>
        <G>
          <path d="M17.500 0 24 3V21L17.500 24 2 9 0 7.500 2.500 5 17.500 17z" fill="#1b8ad6" />
          <path d="M17.500 0V7L2.500 19 0 16.500z" fill="#0f6fb8" />
          <path d="M17.500 0 24 3V21L17.500 24z" fill="#2aa4f0" />
        </G>
      </TaskIcon>
      <TaskIcon dot={dotGray}>
        <G>
          <WpsRound />
        </G>
      </TaskIcon>
      <div className="flex flex-1 items-center pl-[69px]">
        <Ic w={10} h={6} sw={1.6}>
          <path d="M.5 5.500 5 1 9.500 5.500" />
        </Ic>
        <Ic w={17} h={17} sw={1.3} c="ml-[19px]">
          <path d="M1 8A7 7 0 0 1 13.500 3.500M14 0V4H10M5 15.500A7 7 0 0 1 1.500 11.500M1 16V11.500H5" />
          <circle cx="12" cy="12.500" r="4" fill="#ff9800" stroke="none" />
        </Ic>
        <Ic w={17} h={14} c="ml-[15px]">
          <path d="M3 10A3.500 3.500 0 0 1 3 4.500 5 5 0 0 1 12.500 4 3.500 3.500 0 0 1 14 10z" fill="#bfc3c7" stroke="none" />
          <circle cx="11.500" cy="9.500" r="4.500" fill="#1d79d0" stroke="#fff" strokeWidth=".6" />
          <path d="M9 9A2.600 2.600 0 0 1 14 8.500M14 10.500A2.600 2.600 0 0 1 9 10.500" stroke="#fff" />
        </Ic>
        <Ic w={14} h={11} sw={1.3} c="ml-[16px]">
          <path d="M.5 4A9.500 9.500 0 0 1 13.500 4M2.500 6.200A6.500 6.500 0 0 1 11.500 6.200M4.500 8.300A3.600 3.600 0 0 1 9.500 8.300" />
          <circle cx="7" cy="10" r="1.200" fill="#fff" stroke="none" />
        </Ic>
        <Ic w={16} h={13} sw={1.2} c="ml-[10px]">
          <path d="M.5 4.500H3L6.500 1.500V11.500L3 8.500H.5zM8.500 4.500Q10 6.500 8.500 8.500M10.800 2.500Q13.500 6.500 10.800 10.500M13 .8Q17 6.500 13 12.200" />
        </Ic>
        <Ic w={16} h={10} sw={1.2} c="ml-[8px]">
          <rect x=".6" y=".6" width="12.800" height="8.800" rx="1.500" />
          <path d="M2.500 2.500H5.500V7.500H2.500z" fill="#fff" stroke="none" />
          <path d="M15 3.500V6.500" />
        </Ic>
        <div className="ml-[16px] flex w-[62px] flex-col items-end text-[12px] leading-[16px]">
          <Fit c="w-[50px]">12:12 PM</Fit>
          <Fit c="w-[62px]">11/20/2024</Fit>
        </div>
        <Ic w={14} h={16} c="ml-[8px]">
          <path d="M7 .5C3.500 .5 2 3 2 6V9L.3 12H13.700L12 9V6C12 3 10.500 .5 7 .5zM5 13H9Q8.500 15.200 7 15.200T5 13z" fill="#8fdcfb" stroke="none" />
        </Ic>
      </div>
    </div>
  );
}

export default function App() {
  return (
    <div className="flex h-[768px] w-[1366px] flex-col overflow-hidden bg-[#dae0ea] font-['Noto_Sans',sans-serif]">
      <div className="flex h-[720px] shrink-0 bg-[#e4e4e4]">
        <BehindLeft />
        <div className="flex w-[1326px] shrink-0 flex-col overflow-hidden rounded-lg bg-[#eeeeee] shadow-[0_0_2px_rgba(0,0,0,0.5)]">
          <TitleBar />
          <MenuRow />
          <Ribbon />
          <FormulaBar />
          <Sheet />
          <SheetTabs />
          <StatusBar />
        </div>
        <BehindRight />
      </div>
      <Taskbar />
    </div>
  );
}
